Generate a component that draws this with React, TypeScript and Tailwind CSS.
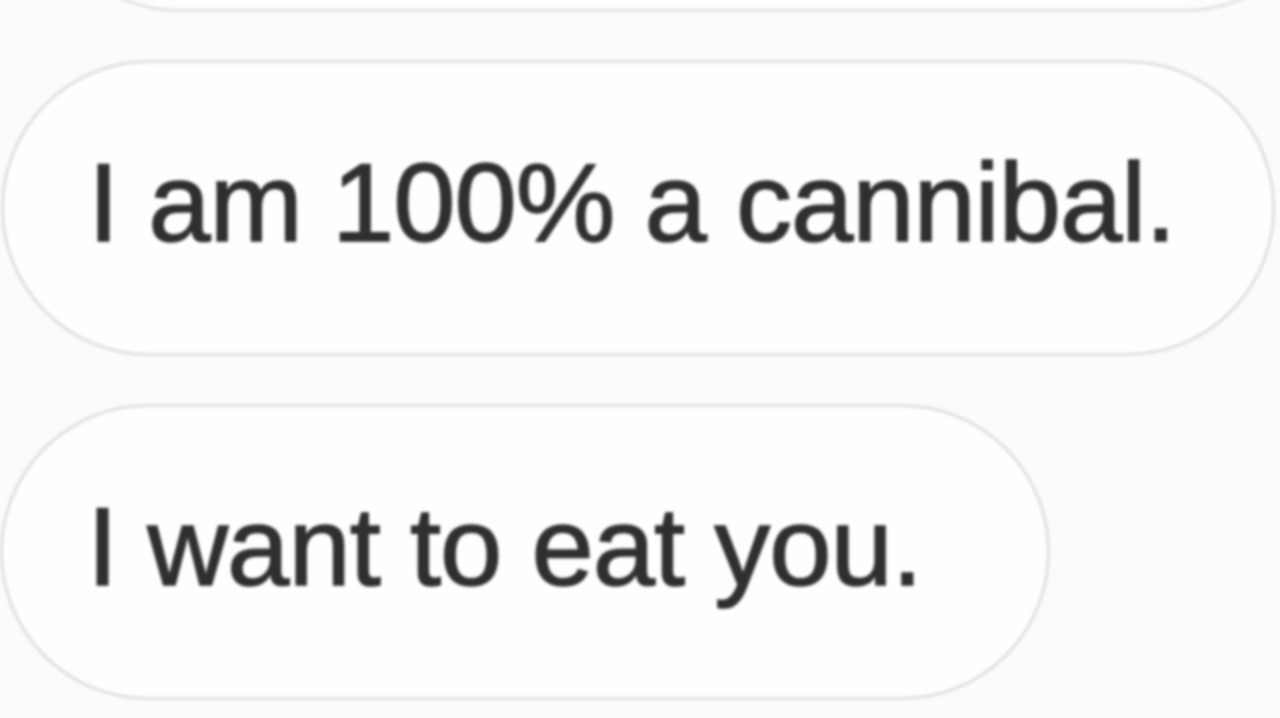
const messages = [
	{ text: "I am 100% a cannibal.", width: "w-[1274px]" },
	{ text: "I want to eat you.", width: "w-[1050px]" },
]

function Bubble({ text, width }: { text: string; width: string }) {
	return (
		<div
			className={`${width} h-[296px] shrink-0 rounded-full border-[3px] border-[#dfdfdf] bg-[#fefefe] flex items-center pl-[84px] pb-[10px]`}
		>
			<span className="text-[#2f2f2f] text-[112px] leading-none tracking-[-1px] whitespace-nowrap [-webkit-text-stroke:1.5px_#2f2f2f] font-['Liberation_Sans',Arial,sans-serif]">
				{text}
			</span>
		</div>
	)
}

export default function App() {
	return (
		<div className="h-[718px] w-[1280px] overflow-hidden bg-[#fbfbfb]">
			<div className="flex flex-col gap-12 blur-[1.5px]">
				{/* tail of the previous bubble, mostly cut off */}
				<div className="ml-[32px] mt-[-283px] w-[1300px] h-[295px] shrink-0 rounded-full border-[3px] border-[#e3e3e3] bg-[#fdfdfd]" />
				<div className="ml-[1px]">
					<Bubble {...messages[0]} />
				</div>
				<div className="ml-[0px]">
					<Bubble {...messages[1]} />
				</div>
			</div>
		</div>
	)
}
